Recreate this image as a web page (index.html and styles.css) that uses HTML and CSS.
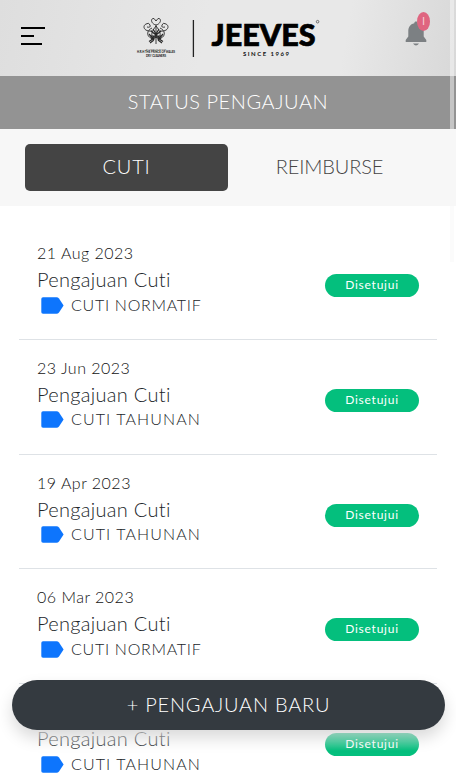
FILE: index.html
```html
<!DOCTYPE html>
<html lang="id">
<head>
<meta charset="utf-8">
<title>Status Pengajuan</title>
<link rel="stylesheet" href="styles.css">
</head>
<body>
<header class="topbar">
  <svg class="menu" width="26" height="20" viewBox="0 0 26 20"><path d="M1 2H25M1 10H14M1 18H22" stroke="#000" stroke-width="2.2"/></svg>
  <svg class="brand" width="188" height="50" viewBox="134 12 188 50">
    <g fill="none" stroke="#292929" stroke-width=".9">
      <path d="M156 25V44M154 40C150 35 152 31 156 26C160 31 162 35 158 40M151 38C146 36 147 30 152 28M161 38C166 36 165 30 160 28"/>
      <path d="M156 25C151 24 150 18 154 18.500L156 21L158 18.500C162 18 161 24 156 25M152 31C144 32 142 26 146 24Q149 22 150 25Q151 28 147 27M160 31C168 32 170 26 166 24Q163 22 162 25Q161 28 165 27"/>
      <path d="M149 34L154 40M163 34L158 40M151 31L161 39M161 31L151 39M149 41.500L156 37L163 41.500M150 43L154 40M162 43L158 40M153 29L156 34L159 29M150 36H162" stroke-width="1.2"/>
    </g>
    <path d="M193.400 20V57" stroke="#222" stroke-width="1.300"/>
    <g class="warrant" text-anchor="middle">
      <text x="156" y="49.500" textLength="20" lengthAdjust="spacingAndGlyphs">BY APPOINTMENT TO</text>
      <text x="156" y="53.200" textLength="38" lengthAdjust="spacingAndGlyphs" class="strong">H.R.H THE PRINCE OF WALES</text>
      <text x="156" y="57.200" textLength="20" lengthAdjust="spacingAndGlyphs" class="strong">DRY CLEANERS</text>
    </g>
    <text class="name" transform="translate(211.500 45.500) scale(.86 1)" textLength="121" lengthAdjust="spacingAndGlyphs">JEEVES</text>
    <text class="since" x="243" y="55.500" textLength="46">SINCE 1969</text>
    <circle cx="317.600" cy="21.700" r="1.300" fill="none" stroke="#444" stroke-width=".7"/>
  </svg>
  <div class="notify">
    <svg width="22" height="25" viewBox="0 0 22 25"><path d="M11 .5C10 .5 9.300 1.200 9.300 2.200C5 3 3.300 6.500 3.300 10V15.500L.7 19V21H21.300V19L18.700 15.500V10C18.700 6.500 17 3 12.700 2.200C12.700 1.200 12 .5 11 .5ZM8 22.400Q11 26.500 14 22.400Z" fill="#7c8083"/></svg>
    <span class="count">I</span>
  </div>
</header>
<h1 class="title"><span>STATUS PENGAJUAN</span></h1>
<nav class="tabs"><a class="tab active">CUTI</a><a class="tab">REIMBURSE</a></nav>
<main class="list">
  <article class="item"><div><time>21 Aug 2023</time><h2>Pengajuan Cuti</h2><p><svg class="tag" width="23" height="17" viewBox="0 0 23 17"><path d="M2 .3H15.500Q17 .3 18 1.500L22.600 8.500L18 15.500Q17 16.700 15.500 16.700H2Q.3 16.700 .3 15V2Q.3 .3 2 .3Z" fill="#0d75fd"/></svg><span class="normatif">CUTI NORMATIF</span></p></div><span class="status">Disetujui</span></article>
  <article class="item"><div><time>23 Jun 2023</time><h2>Pengajuan Cuti</h2><p><svg class="tag" width="23" height="17" viewBox="0 0 23 17"><path d="M2 .3H15.500Q17 .3 18 1.500L22.600 8.500L18 15.500Q17 16.700 15.500 16.700H2Q.3 16.700 .3 15V2Q.3 .3 2 .3Z" fill="#0d75fd"/></svg><span>CUTI TAHUNAN</span></p></div><span class="status">Disetujui</span></article>
  <article class="item"><div><time>19 Apr 2023</time><h2>Pengajuan Cuti</h2><p><svg class="tag" width="23" height="17" viewBox="0 0 23 17"><path d="M2 .3H15.500Q17 .3 18 1.500L22.600 8.500L18 15.500Q17 16.700 15.500 16.700H2Q.3 16.700 .3 15V2Q.3 .3 2 .3Z" fill="#0d75fd"/></svg><span>CUTI TAHUNAN</span></p></div><span class="status">Disetujui</span></article>
  <article class="item"><div><time>06 Mar 2023</time><h2>Pengajuan Cuti</h2><p><svg class="tag" width="23" height="17" viewBox="0 0 23 17"><path d="M2 .3H15.500Q17 .3 18 1.500L22.600 8.500L18 15.500Q17 16.700 15.500 16.700H2Q.3 16.700 .3 15V2Q.3 .3 2 .3Z" fill="#0d75fd"/></svg><span class="normatif">CUTI NORMATIF</span></p></div><span class="status">Disetujui</span></article>
  <article class="item"><div><time></time><h2>Pengajuan Cuti</h2><p><svg class="tag" width="23" height="17" viewBox="0 0 23 17"><path d="M2 .3H15.500Q17 .3 18 1.500L22.600 8.500L18 15.500Q17 16.700 15.500 16.700H2Q.3 16.700 .3 15V2Q.3 .3 2 .3Z" fill="#0d75fd"/></svg><span>CUTI TAHUNAN</span></p></div><span class="status">Disetujui</span></article>
</main>
<div class="dock"><button class="new"><span>+ PENGAJUAN BARU</span></button></div>
<div class="scrollbar"></div>
</body>
</html>
```
FILE: styles.css
```css
* { box-sizing: border-box; }
body { margin: 0; height: 780px; overflow: hidden; background: #fff; color: #212529; font-family: Lato, "Liberation Sans", sans-serif; font-weight: 300; }
.topbar { display: flex; align-items: flex-start; height: 76px; background: linear-gradient(100deg, #dedede, #e8e8e8 45%, #e8e8e8 75%, #d8d8d8); }
.menu { margin: 26px 0 0 20px; }
.brand { margin: 12px 0 0 88px; }
.warrant { font-size: 2.3px; fill: #444; font-weight: 400; }
.warrant .strong { font-size: 2.8px; font-weight: 700; fill: #111; }
.name { font-size: 31px; font-weight: 900; fill: #000; stroke: #000; stroke-width: .7px; }
.since { font-size: 6px; font-weight: 700; fill: #111; }
.notify { position: relative; margin: 21px 0 0 83px; height: 25px; }
.count { position: absolute; left: 12px; top: -9px; width: 13px; height: 19px; border-radius: 50%; background: #df6580; color: #f5cbd3; font-size: 11px; font-weight: 400; line-height: 18px; text-align: center; }
.title { display: flex; align-items: center; justify-content: center; margin: 0; height: 53px; padding-bottom: 3px; background: #939393; color: #fff; font-size: 20px; font-weight: 300; letter-spacing: .55px; }
.tabs { display: flex; height: 77px; padding: 15px 25px; background: #f7f7f7; }
.tab { flex: 1; display: flex; align-items: center; justify-content: center; height: 47px; padding-bottom: 3px; border-radius: 5px; color: #444; font-size: 20px; letter-spacing: -.15px; }
.active { background: #444; color: #fff; letter-spacing: .8px; }
.list { padding: 19px 19px 0; }
.item { display: flex; justify-content: space-between; height: 114.75px; padding: 17px 18px 0; border-bottom: 1px solid #dee2e6; }
.item time { display: block; height: 23px; font-size: 16px; line-height: 22px; letter-spacing: .5px; color: #111; font-weight: 300; }
.item h2 { margin: 0; height: 27px; font-size: 20px; line-height: 28px; letter-spacing: .3px; font-weight: 300; }
.item p { display: flex; align-items: center; margin: 0; height: 26px; padding-left: 4px; gap: 7px; font-size: 16px; line-height: 22px; letter-spacing: 1.1px; }
.item p span { padding-bottom: 1px; }
.item .normatif { letter-spacing: .73px; }
.tag { flex: none; }
.status { width: 94px; height: 23px; margin-top: 32px; border-radius: 12px; background: #04bf7d; color: #fff; font-size: 12px; line-height: 22px; letter-spacing: .75px; text-align: center; font-weight: 400; }
.dock { position: absolute; left: 0; top: 680px; width: 456px; height: 77px; padding: 0 11px 0 12px; background: linear-gradient(#fff0 0, #fff0 30%, #fffc 62%, #fff8 72%, #fff0 92%); }
.new { display: flex; align-items: center; justify-content: center; width: 100%; height: 50px; padding: 0 0 2px; border: 0; border-radius: 25px; background: #343a40; color: #fff; font: 300 20px Lato, sans-serif; letter-spacing: .75px; box-shadow: 0 8px 16px rgba(0,0,0,.15); }
.scrollbar { position: absolute; right: 2px; top: 0; width: 4px; height: 262px; background: rgba(248,248,248,.5); }
```
